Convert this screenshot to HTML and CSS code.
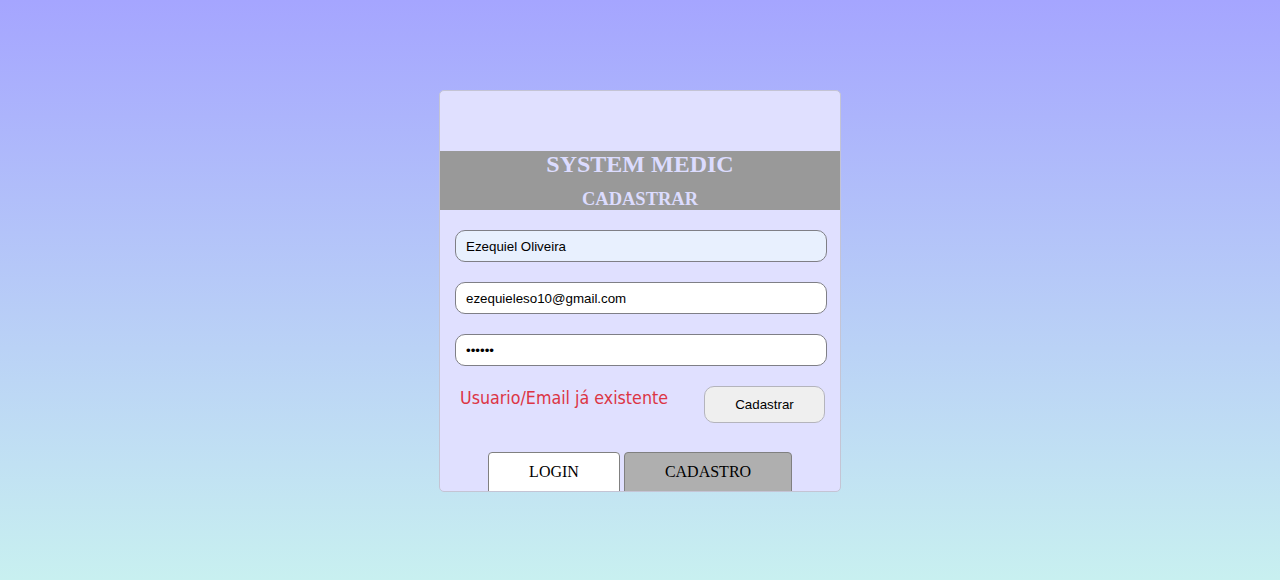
FILE: index.html
```html
<!DOCTYPE html>
<html lang="pt">
<head>
<meta charset="utf-8">
<title>System Medic - Cadastrar</title>
<link rel="stylesheet" href="styles.css">
</head>
<body>
<main class="page">
  <section class="card">
    <header class="card-head">
      <h1 class="title">SYSTEM MEDIC</h1>
      <h2 class="subtitle">CADASTRAR</h2>
    </header>
    <form class="form">
      <input class="field field-autofill" type="text" value="Ezequiel Oliveira">
      <input class="field" type="email" value="ezequieleso10@gmail.com">
      <input class="field" type="password" value="123456">
      <div class="actions">
        <p class="error">Usuario/Email já existente</p>
        <button class="submit" type="button">Cadastrar</button>
      </div>
    </form>
    <nav class="tabs">
      <button class="tab" type="button">LOGIN</button>
      <button class="tab tab-active" type="button">CADASTRO</button>
    </nav>
  </section>
</main>
</body>
</html>
```
FILE: styles.css
```css
html, body {
  margin: 0;
  padding: 0;
}
body {
  height: 580px;
  background: linear-gradient(to bottom, #a5a5ff 0%, #c8f0f0 100%);
  font-family: "Liberation Sans", Arial, sans-serif;
}
.page {
  display: flex;
  justify-content: center;
  padding-top: 90px;
}
.card {
  box-sizing: border-box;
  width: 402px;
  height: 402px;
  border: 1px solid #c4c4d4;
  border-radius: 5px;
  background: #e0e0ff;
  overflow: hidden;
  display: flex;
  flex-direction: column;
}
.card-head {
  flex-shrink: 0;
  margin-top: 60px;
  height: 59px;
  background: #999999;
  color: #dcdcff;
  text-align: center;
  font-family: "Liberation Serif", "Times New Roman", serif;
  font-weight: bold;
}
.title {
  margin: 0;
  font-size: 24px;
  line-height: 26px;
}
.subtitle {
  margin: 0;
  font-size: 18.5px;
  line-height: 20px;
  padding-top: 12px;
}
.form {
  flex-shrink: 0;
  display: flex;
  flex-direction: column;
  align-items: flex-start;
  gap: 20px;
  padding: 20px 0 0 15px;
}
.field {
  box-sizing: border-box;
  width: 372px;
  height: 32px;
  margin: 0;
  padding: 0 10px;
  border: 1px solid #7f7f86;
  border-radius: 10px;
  background: #ffffff;
  font-family: "Liberation Sans", Arial, sans-serif;
  font-size: 13.33px;
  color: #000;
  outline: none;
}
.field-autofill {
  background: #e8f0fe;
}
.actions {
  box-sizing: border-box;
  width: 372px;
  display: flex;
  justify-content: space-between;
  align-items: flex-start;
  padding: 0 2px 0 5px;
}
.error {
  margin: 0;
  color: #dc3545;
  font-family: "DejaVu Sans Condensed", "DejaVu Sans", sans-serif;
  font-size: 17.7px;
  line-height: 24px;
}
.submit {
  width: 121px;
  height: 37px;
  border: 1px solid #b4b4bc;
  border-radius: 10px;
  background: #efefef;
  font-family: "Liberation Sans", Arial, sans-serif;
  font-size: 13.33px;
  color: #000;
}
.tabs {
  flex-shrink: 0;
  display: flex;
  justify-content: center;
  gap: 4px;
  margin-top: 29px;
}
.tab {
  height: 44px;
  border: 1px solid #808080;
  border-radius: 4px 4px 0 0;
  background: #ffffff;
  font-family: "Liberation Serif", "Times New Roman", serif;
  font-size: 16px;
  color: #000;
  padding: 0 0 5px 0;
  width: 132px;
}
.tab-active {
  width: 168px;
  background: #afafaf;
}
```
